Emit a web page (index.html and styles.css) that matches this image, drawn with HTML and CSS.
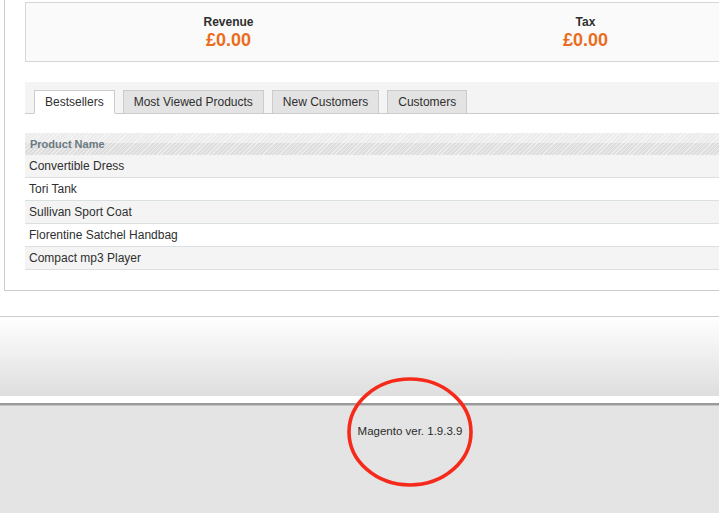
FILE: index.html
```html
<!DOCTYPE html>
<html>
<head>
<meta charset="utf-8">
<link rel="stylesheet" href="styles.css">
</head>
<body>
<div class="page">
  <div class="main">
    <div class="totals">
      <div class="total-cell"><div class="t-label">Revenue</div><div class="t-value">£0.00</div></div>
      <div class="total-cell"><div class="t-label">Tax</div><div class="t-value">£0.00</div></div>
    </div>
    <ul class="tabs">
      <li class="tab active">Bestsellers</li>
      <li class="tab">Most Viewed Products</li>
      <li class="tab">New Customers</li>
      <li class="tab">Customers</li>
    </ul>
    <div class="grid">
      <div class="grid-head">Product Name</div>
      <div class="row odd">Convertible Dress</div>
      <div class="row">Tori Tank</div>
      <div class="row odd">Sullivan Sport Coat</div>
      <div class="row">Florentine Satchel Handbag</div>
      <div class="row odd">Compact mp3 Player</div>
    </div>
  </div>
  <div class="footer-top"></div>
  <div class="footer">
    <p class="version">Magento ver. 1.9.3.9</p>
  </div>
  <svg class="annotation" width="140" height="124" viewBox="0 0 140 124">
    <ellipse cx="70" cy="62" rx="61" ry="53" fill="none" stroke="#f62a1b" stroke-width="3.6"/>
  </svg>
</div>
</body>
</html>
```

FILE: styles.css
```css
html, body {
  margin: 0;
  padding: 0;
  overflow: hidden;
  background: #e4e4e4;
}
body {
  font-family: "Liberation Sans", Arial, sans-serif;
  font-size: 12px;
  color: #2f2f2f;
}
.page {
  position: relative;
  width: 820px;
  height: 513px;
  background: #ffffff;
}
.main {
  margin-left: 4px;
  padding: 2px 0 20px 20px;
  border-left: 1px solid #cccccc;
  border-bottom: 1px solid #cccccc;
  background: #ffffff;
}
.totals {
  display: flex;
  padding: 12px 0 11px 24px;
  border: 1px solid #d6d6d6;
  border-right: none;
  background: #fafafa;
}
.total-cell {
  flex: 0 0 357px;
  text-align: center;
}
.t-label {
  font-weight: bold;
  font-size: 12px;
  line-height: 15px;
  color: #2f2f2f;
}
.t-value {
  font-weight: bold;
  font-size: 18px;
  line-height: 20px;
  color: #eb6c1c;
}
.tabs {
  display: flex;
  gap: 8px;
  list-style: none;
  margin: 20px 0 0 0;
  padding: 8px 0 0 9px;
  background: #f4f4f4;
  border-bottom: 1px solid #cccccc;
}
.tab {
  margin-bottom: -1px;
  padding: 0 10px;
  line-height: 22px;
  border: 1px solid #cccccc;
  background: #e3e3e3;
  color: #2f2f2f;
  font-size: 12px;
}
.tab.active {
  background: #ffffff;
  border-bottom-color: #ffffff;
}
.grid {
  margin-top: 19px;
}
.grid-head {
  height: 22px;
  line-height: 22px;
  padding-left: 5px;
  font-size: 11px;
  font-weight: bold;
  color: #6a7a82;
  background:
    repeating-linear-gradient(135deg, rgba(255,255,255,0.45) 0 1px, rgba(255,255,255,0) 1px 3px),
    linear-gradient(#ececec 0 45%, #dedede 45% 100%);
}
.row {
  height: 22px;
  line-height: 22px;
  padding-left: 4px;
  border-bottom: 1px solid #dadfe0;
  background: #ffffff;
  font-size: 12px;
  color: #2f2f2f;
}
.row.odd {
  background: #f4f4f4;
}
.footer-top {
  margin-top: 25px;
  height: 79px;
  border-top: 1px solid #cccccc;
  background: linear-gradient(#ffffff 0%, #f7f7f7 25%, #ebebeb 60%, #dedede 100%);
  border-bottom: 7px solid #ffffff;
}
.footer {
  border-top: 2px solid #9a9a9a;
  box-shadow: inset 0 1px 0 #c4c4c4;
  background: #e4e4e4;
  height: 120px;
}
.version {
  margin: 0;
  padding-top: 19px;
  text-align: center;
  font-size: 11.5px;
  line-height: 14px;
  color: #2b2b2b;
}
.annotation {
  position: absolute;
  left: 340px;
  top: 370px;
}
```
